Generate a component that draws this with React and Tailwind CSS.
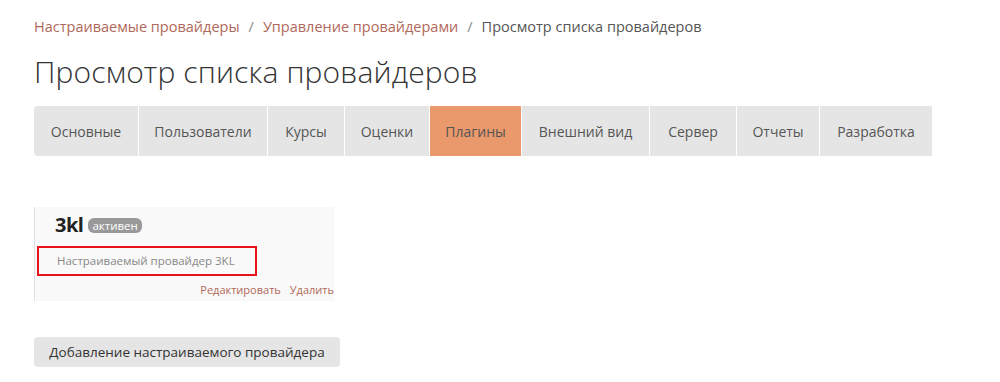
import React from "react";

const tabs = [
  { label: "Основные", w: "w-[104px]" },
  { label: "Пользователи", w: "w-[128px]" },
  { label: "Курсы", w: "w-[76px]" },
  { label: "Оценки", w: "w-[84px]" },
  { label: "Плагины", w: "w-[91px]", active: true },
  { label: "Внешний вид", w: "w-[127px]" },
  { label: "Сервер", w: "w-[86px]" },
  { label: "Отчеты", w: "w-[82px]" },
  { label: "Разработка", w: "w-[112px]" },
];

export default function App() {
  return (
    <div className="min-h-[382px] bg-white px-[34px] pt-[16px] font-['Open_Sans',sans-serif] text-[#333]">
      {/* breadcrumb */}
      <nav className="flex items-center text-[14.5px] leading-[22px]">
        <a className="text-[#b0685a]">Настраиваемые провайдеры</a>
        <span className="mx-[9px] text-[#888]">/</span>
        <a className="text-[#b0685a]">Управление провайдерами</a>
        <span className="mx-[9px] text-[#888]">/</span>
        <span className="text-[#555]">Просмотр списка провайдеров</span>
      </nav>

      <h1 className="mt-[16px] text-[30px] leading-[36px] font-light tracking-[0.15px] text-[#333]">
        Просмотр списка провайдеров
      </h1>

      {/* tabs */}
      <div className="mt-[16px] flex gap-px">
        {tabs.map((t, i) => (
          <div
            key={t.label}
            className={`${t.w} flex h-[50px] items-center justify-center text-[14px] text-[#555] ${
              t.active ? "bg-[#e9996c] text-[#333]" : "bg-[#e5e5e5]"
            } ${i === 0 ? "rounded-l-[4px]" : ""}`}
          >
            {t.label}
          </div>
        ))}
      </div>

      {/* provider card */}
      <div className="mt-[51px] flex w-[300px] flex-col border-l border-[#dedede] bg-[#f9f9f9] pb-[3px]">
        <div className="flex items-center gap-[5px] pl-[20px] pt-[6px]">
          <span className="text-[20px] font-bold leading-[24px] tracking-[-0.5px] text-[#222]">3kl</span>
          <span className="rounded-[6px] bg-[#999] px-[4px] text-[11.5px] leading-[15px] text-white">активен</span>
        </div>
        <div className="ml-[2px] mt-[9px] flex h-[30px] w-[220px] items-center border-2 border-[#e8121a] pl-[18px] text-[11.5px] text-[#888]">
          Настраиваемый провайдер 3KL
        </div>
        <div className="mt-[6px] flex justify-end gap-[9px] text-[11px] leading-[16px] text-[#b0685a]">
          <a>Редактировать</a>
          <a>Удалить</a>
        </div>
      </div>

      <button className="mt-[36px] flex h-[30px] w-[306px] items-center justify-center rounded-[4px] bg-[#e5e5e5] text-[13.5px] text-[#333]">
        Добавление настраиваемого провайдера
      </button>
    </div>
  );
}
